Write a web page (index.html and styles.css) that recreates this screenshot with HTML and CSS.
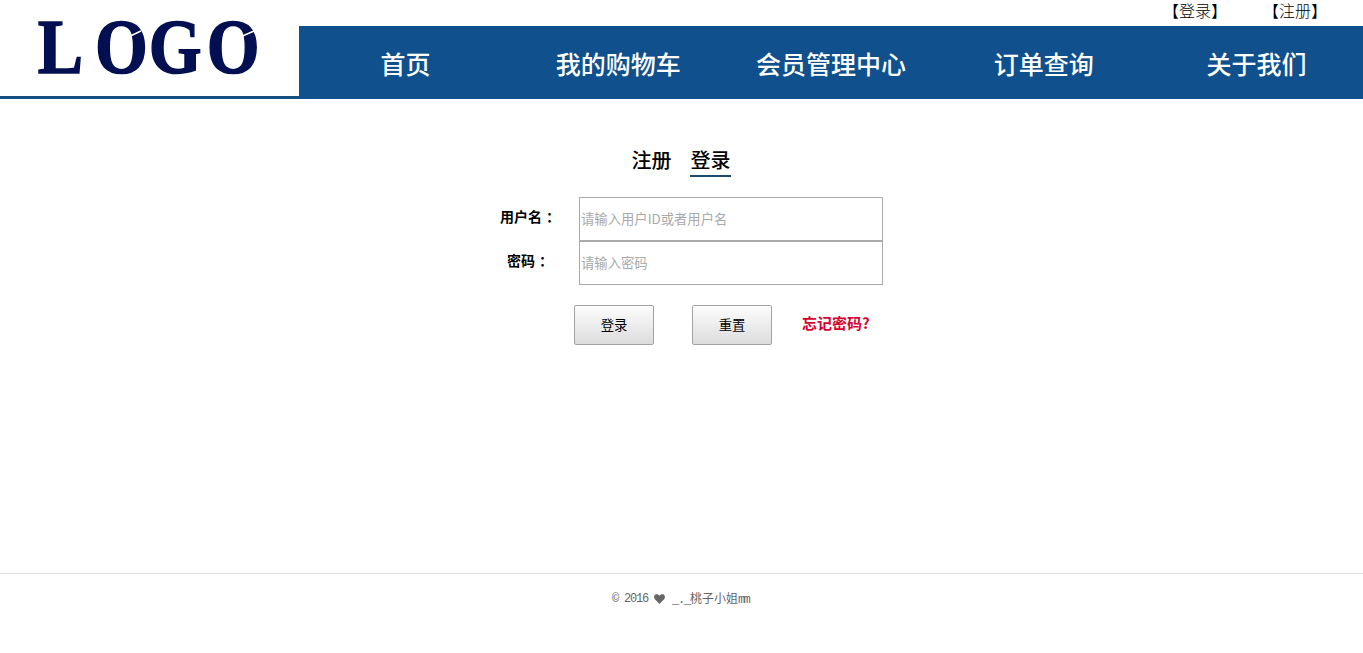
FILE: index.html
```
<!DOCTYPE html>
<html lang="zh-CN">
<head>
<meta charset="utf-8">
<title>登录</title>
<link rel="stylesheet" href="styles.css">
</head>
<body>
<header class="header">
  <a class="logo" href="#" aria-label="LOGO">
    <svg class="logo-svg" width="299" height="96" viewBox="0 0 299 96">
      <text class="logo-text" x="44 110.5 173 240.5" y="73" transform="scale(0.86 1)">LOGO</text>
      <path class="logo-cut" d="M126 38 L141 31 M238 38 L254 31"/>
    </svg>
  </a>
  <div class="header-right">
    <div class="top-links">
      <a href="#">【登录】</a>
      <a href="#">【注册】</a>
    </div>
    <nav class="nav">
      <a href="#">首页</a>
      <a href="#">我的购物车</a>
      <a href="#">会员管理中心</a>
      <a href="#">订单查询</a>
      <a href="#">关于我们</a>
    </nav>
  </div>
</header>
<main class="main">
  <div class="tabs">
    <a class="tab" href="#">注册</a>
    <a class="tab tab-active" href="#">登录</a>
  </div>
  <form class="form">
    <div class="row">
      <label class="label" for="user">用户名<span class="colon">：</span></label>
      <input class="input" id="user" type="text" placeholder="请输入用户ID或者用户名">
    </div>
    <div class="row">
      <label class="label" for="pwd">密码<span class="colon">：</span></label>
      <input class="input" id="pwd" type="password" placeholder="请输入密码">
    </div>
    <div class="actions">
      <button class="btn" type="button">登录</button>
      <button class="btn" type="reset">重置</button>
      <a class="forgot" href="#">忘记密码?</a>
    </div>
  </form>
</main>
<footer class="footer">
  <span class="mono">© 2016</span>
  <svg class="heart" width="11" height="10" viewBox="0 0 11 10"><path d="M5.5 10 L0.9 5.3 C-0.4 3.8 -0.1 1.5 1.4 0.6 C2.9 -0.3 4.6 0.2 5.5 1.7 C6.4 0.2 8.1 -0.3 9.6 0.6 C11.1 1.5 11.4 3.8 10.1 5.3 Z"/></svg>
  <span class="name"><span class="mono">_._</span>桃子小姐<span class="mono mono-tight">mm</span></span>
</footer>
</body>
</html>
```
FILE: styles.css
```
* { box-sizing: border-box; }
html, body { margin: 0; padding: 0; }
body {
  background: #fff;
  color: #000;
  font-family: "Noto Sans CJK SC", "Liberation Sans", sans-serif;
  overflow: hidden;
}
a { color: inherit; text-decoration: none; }

.header { display: flex; height: 99px; }
.logo {
  display: block;
  flex: 0 0 299px;
  height: 99px;
  border-bottom: 3px solid #134f7f;
}
.logo-svg { display: block; }
.logo-text {
  font-family: "Liberation Serif", serif;
  font-weight: 700;
  font-size: 79px;
  fill: #020f50;
  stroke: #020f50;
  stroke-width: 1.5px;
}
.logo-cut { fill: none; stroke: #fff; stroke-width: 1.5px; }
.header-right { flex: 1; display: flex; flex-direction: column; }
.top-links {
  height: 26px;
  display: flex;
  justify-content: flex-end;
  gap: 36px;
  padding-right: 36px;
  font-size: 16px;
  font-weight: 300;
  line-height: 21px;
}
.nav {
  height: 73px;
  background: #10508c;
  display: flex;
}
.nav a {
  flex: 1;
  text-align: center;
  color: #fff;
  font-size: 25px;
  font-weight: 500;
  line-height: 75px;
}

.main { height: 474px; padding-top: 47px; }
.tabs {
  display: flex;
  justify-content: center;
  gap: 18px;
  margin-bottom: 20px;
  padding-right: 1px;
}
.tab {
  width: 41px;
  height: 31px;
  font-size: 20px;
  font-weight: 500;
  line-height: 27px;
  text-align: center;
  white-space: nowrap;
}
.tab-active { border-bottom: 2px solid #1f4a70; }

.form { width: 405px; margin: 0 auto; }
.row { display: flex; align-items: center; gap: 4px; }
.label {
  width: 96px;
  text-align: center;
  font-size: 14px;
  font-weight: 700;
  position: relative;
  top: -3px;
  left: 1px;
}
.colon {
  font-family: "Noto Sans CJK TC", sans-serif;
  margin: 0 -4px 0 4px;
}
.input {
  width: 304px;
  height: 44px;
  border: 1px solid #aaa;
  padding: 0 1px 2px;
  font-family: inherit;
  font-size: 13.33px;
  outline: none;
  border-radius: 0;
}
.input::placeholder { color: #a9a9a9; opacity: 1; }

.actions {
  display: flex;
  align-items: center;
  margin: 20px 0 0 95px;
}
.btn {
  width: 80px;
  height: 40px;
  margin-right: 38px;
  padding: 0 0 2px;
  border: 1px solid #a3a3a3;
  border-radius: 2px;
  background: linear-gradient(#fdfdfd, #dcdcdc);
  color: #000;
  font-family: inherit;
  font-size: 13.33px;
}
.btn + .btn { margin-right: 30px; }
.forgot {
  color: #d6002c;
  font-size: 15px;
  font-weight: 700;
  position: relative;
  top: -3px;
  white-space: nowrap;
}

.footer {
  height: 80px;
  border-top: 1px solid #ddd;
  display: flex;
  justify-content: center;
  align-items: center;
  padding: 0 2px 30px 0;
  color: #666;
  font-size: 12px;
  line-height: 16px;
}
.mono {
  font-family: "Liberation Mono", monospace;
  letter-spacing: -1.2px;
}
.mono-tight { letter-spacing: -1.8px; }
.heart { fill: #666; margin: 0 7px 0 6px; }
.name { white-space: nowrap; }
```
